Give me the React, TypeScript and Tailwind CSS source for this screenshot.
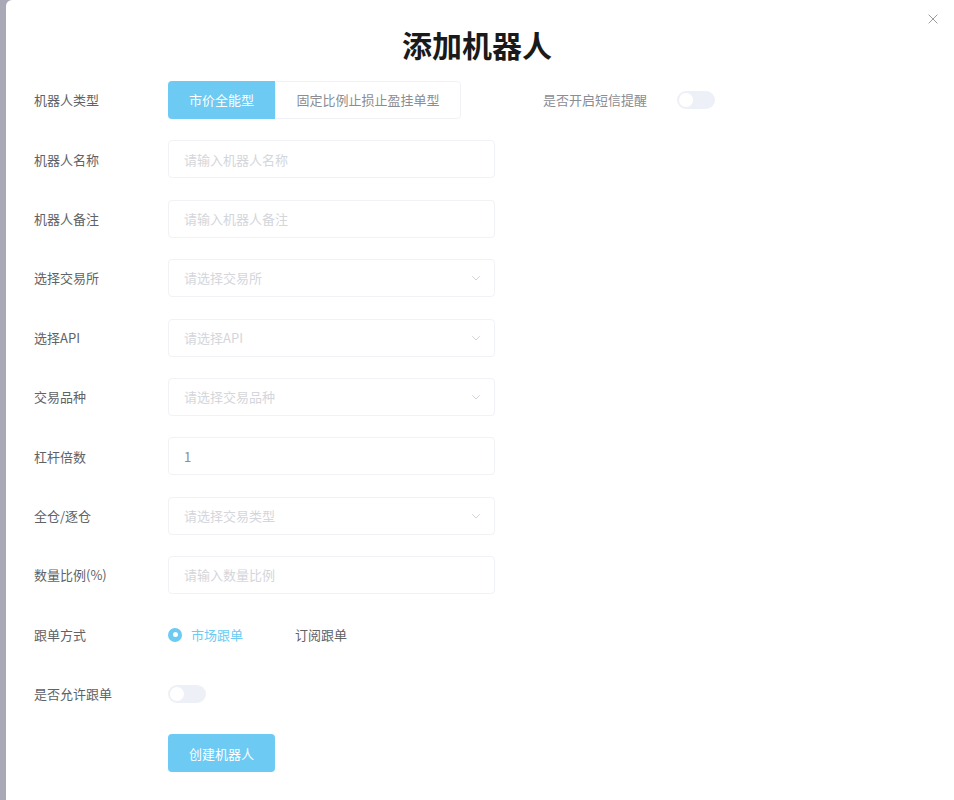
import { useState } from 'react'

const font = { fontFamily: '"Noto Sans CJK SC", "Noto Sans", sans-serif' }

function Chevron() {
  return (
    <svg className="w-3 h-3 text-[#d0d3da]" fill="none" stroke="currentColor" viewBox="0 0 24 24">
      <path strokeLinecap="round" strokeLinejoin="round" strokeWidth={2} d="M5 9l7 7 7-7" />
    </svg>
  )
}

function Toggle({ on = false }: { on?: boolean }) {
  return (
    <div className={`w-[38px] h-[18px] rounded-full flex items-center px-[2px] ${on ? 'bg-[#6ccaf3] justify-end' : 'bg-[#edf0f6] justify-start'}`}>
      <div className="w-[14px] h-[14px] rounded-full bg-white" />
    </div>
  )
}

function Row({ label, children }: { label: string; children: React.ReactNode }) {
  return (
    <div className="flex items-center h-[38px]">
      <div className="w-[134px] shrink-0 text-[13px] text-[#606266]">{label}</div>
      {children}
    </div>
  )
}

function TextInput({ placeholder, value }: { placeholder: string; value?: string }) {
  return (
    <div className="w-[327px] h-[38px] border border-[#f1f2f5] rounded-[4px] flex items-center px-[15px] text-[13px]">
      {value ? <span className="text-[#8a8d93]">{value}</span> : <span className="text-[#d4d6db]">{placeholder}</span>}
    </div>
  )
}

function Select({ placeholder }: { placeholder: string }) {
  return (
    <div className="w-[327px] h-[38px] border border-[#f1f2f5] rounded-[4px] flex items-center justify-between pl-[15px] pr-[12px] text-[13px]">
      <span className="text-[#d4d6db]">{placeholder}</span>
      <Chevron />
    </div>
  )
}

export default function App() {
  const [robotType, setRobotType] = useState(0)

  return (
    <div className="w-[954px] h-[800px] bg-[#a9a8b7] pl-[6px]" style={font}>
      <div className="relative h-full bg-white rounded-tl-[6px] pl-[28px]">
        <button className="absolute right-[14px] top-[12px] text-[#909399]" aria-label="close">
          <svg className="w-[14px] h-[14px]" fill="none" stroke="currentColor" viewBox="0 0 24 24">
            <path strokeLinecap="round" strokeWidth={1.6} d="M5 5l14 14M19 5L5 19" />
          </svg>
        </button>

        <h1 className="pt-[22px] h-[81px] text-center text-[30px] leading-[44px] font-bold text-[#1a1a1a] pr-[34px]">添加机器人</h1>

        <div className="flex flex-col gap-[21.4px]">
          <div className="flex items-center h-[38px]">
            <div className="w-[134px] shrink-0 text-[13px] text-[#606266]">机器人类型</div>
            <div className="flex h-[38px] text-[13px]">
              <button
                onClick={() => setRobotType(0)}
                className={`w-[107px] rounded-l-[4px] ${robotType === 0 ? 'bg-[#6ccaf3] text-white' : 'border border-[#f1f2f5] text-[#8a8d93]'}`}
              >
                市价全能型
              </button>
              <button
                onClick={() => setRobotType(1)}
                className={`w-[186px] rounded-r-[4px] ${robotType === 1 ? 'bg-[#6ccaf3] text-white' : 'border border-[#f1f2f5] text-[#8a8d93]'}`}
              >
                固定比例止损止盈挂单型
              </button>
            </div>
            <div className="ml-[82px] text-[13px] text-[#8a8d93]">是否开启短信提醒</div>
            <div className="ml-[30px]">
              <Toggle />
            </div>
          </div>

          <Row label="机器人名称">
            <TextInput placeholder="请输入机器人名称" />
          </Row>
          <Row label="机器人备注">
            <TextInput placeholder="请输入机器人备注" />
          </Row>
          <Row label="选择交易所">
            <Select placeholder="请选择交易所" />
          </Row>
          <Row label="选择API">
            <Select placeholder="请选择API" />
          </Row>
          <Row label="交易品种">
            <Select placeholder="请选择交易品种" />
          </Row>
          <Row label="杠杆倍数">
            <TextInput placeholder="" value="1" />
          </Row>
          <Row label="全仓/逐仓">
            <Select placeholder="请选择交易类型" />
          </Row>
          <Row label="数量比例(%)">
            <TextInput placeholder="请输入数量比例" />
          </Row>
          <Row label="跟单方式">
            <div className="flex items-center text-[13px]">
              <div className="w-[14px] h-[14px] rounded-full bg-[#6ccaf3] flex items-center justify-center">
                <div className="w-[5px] h-[5px] rounded-full bg-white" />
              </div>
              <span className="ml-[9px] text-[#6ccaf3]">市场跟单</span>
              <span className="ml-[52px] text-[#606266]">订阅跟单</span>
            </div>
          </Row>
          <Row label="是否允许跟单">
            <Toggle />
          </Row>
          <div className="flex items-center h-[38px] pl-[134px]">
            <button className="w-[107px] h-[38px] rounded-[4px] bg-[#6ccaf3] text-white text-[13px]">创建机器人</button>
          </div>
        </div>
      </div>
    </div>
  )
}
